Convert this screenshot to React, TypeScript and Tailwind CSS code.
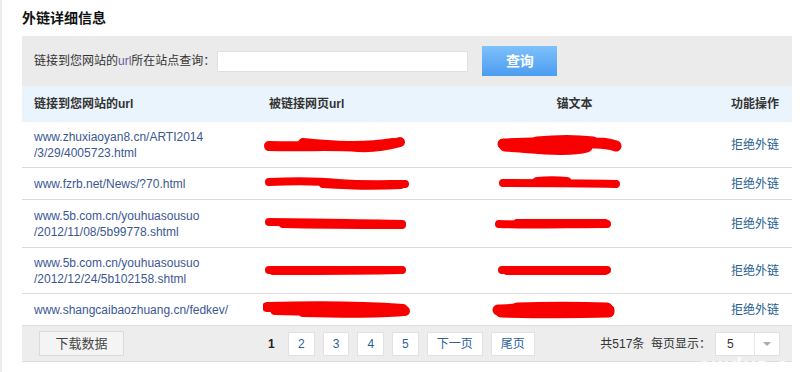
import React from "react";

type Row = {
  url: string[];
  h: string;
  a: string[];
  b: string[];
};

const rows: Row[] = [
  {
    url: ["www.zhuxiaoyan8.cn/ARTI2014", "/3/29/4005723.html"],
    h: "h-[46px]",
    a: ["M6 12 C40 13 70 11 95 13 C115 14 130 10 137 8", "M40 9 C70 12 100 14 130 9"],
    b: ["M26 10 C50 9 90 8 118 9 C126 9 130 9 139 12", "M28 12 C60 14 90 18 110 13", "M60 8 C80 6 100 6 116 8"],
  },
  {
    url: ["www.fzrb.net/News/?70.html"],
    h: "h-[32px]",
    a: ["M6 9 C30 8 55 8 75 10 C100 12 125 11 142 11", "M60 11 C90 13 120 13 138 12"],
    b: ["M26 10 C60 10 100 10 139 11", "M60 8 C70 7 80 7 90 8"],
  },
  {
    url: ["www.5b.com.cn/youhuasousuo", "/2012/11/08/5b99778.shtml"],
    h: "h-[48px]",
    a: ["M6 9 C40 9 90 10 139 11", "M20 11 C60 12 100 12 139 12"],
    b: ["M22 11 C50 12 90 11 130 11", "M40 10 C70 10 100 10 128 10"],
  },
  {
    url: ["www.5b.com.cn/youhuasousuo", "/2012/12/24/5b102158.shtml"],
    h: "h-[46px]",
    a: ["M6 10 C40 10 90 10 139 10", "M10 11 C50 11 100 11 138 10"],
    b: ["M25 10 C55 10 95 10 130 10", "M30 11 C60 11 100 11 128 11"],
  },
  {
    url: ["www.shangcaibaozhuang.cn/fedkev/"],
    h: "h-[32px]",
    a: ["M4 8 C40 7 100 7 140 10", "M12 11 C50 12 100 12 142 12", "M40 13 C80 14 120 14 140 12"],
    b: ["M21 11 C50 10 90 6 132 11", "M24 13 C60 14 100 14 132 13", "M40 9 C70 8 100 8 130 9"],
  },
];

function Scribble({ paths, w, thick }: { paths: string[]; w: number; thick: number }) {
  return (
    <svg width={w} height={22} viewBox={`0 0 ${w} 22`} className="block">
      {paths.map((d, i) => (
        <path
          key={i}
          d={d}
          fill="none"
          stroke="#f80000"
          strokeWidth={thick}
          strokeLinecap="round"
          strokeLinejoin="round"
        />
      ))}
    </svg>
  );
}

function PageBtn({ children }: { children: React.ReactNode }) {
  return (
    <div className="h-[24px] px-[9px] min-w-[26px] flex items-center justify-center bg-white border border-[#e2e2e2] text-[#2b5f99] text-[12px]">
      {children}
    </div>
  );
}

export default function App() {
  const font = { fontFamily: '"Liberation Sans", "Noto Sans CJK SC", sans-serif' };
  return (
    <div
      className="relative w-[808px] h-[372px] overflow-hidden bg-white border-l-[2px] border-[#ececec] pl-[20px] pr-[16px]"
      style={font}
    >
      <div className="h-[36px] pt-[9px] text-[14px] font-bold text-[#111] leading-[18px]">外链详细信息</div>

      {/* search */}
      <div className="h-[50px] bg-[#ebebeb] flex items-center pl-[12px]">
        <span className="text-[12px] text-[#333]">
          链接到您网站的<span className="text-[#6b5a9a]">url</span>所在站点查询：
        </span>
        <input className="ml-[2px] w-[251px] h-[21px] bg-white border border-[#e0e0e0] outline-none" />
        <button className="ml-[14px] w-[75px] h-[30px] bg-gradient-to-b from-[#7ec0fa] to-[#4a9df0] text-white text-[14px] font-bold">
          查询
        </button>
      </div>

      {/* header */}
      <div className="h-[36px] bg-[#eaf4fc] flex items-center text-[12px] font-bold text-[#333]">
        <div className="w-[235px] pl-[12px]">链接到您网站的url</div>
        <div className="w-[220px] pl-[12px]">被链接网页url</div>
        <div className="flex-1 text-center">锚文本</div>
        <div className="w-[120px] text-right pr-[13px]">功能操作</div>
      </div>

      {rows.map((r, i) => (
        <div key={i} className={`${r.h} flex items-center border-b border-[#dcdcdc] text-[12px]`}>
          <div className="w-[235px] pl-[12px] text-[#3b5894] leading-[16px]">
            {r.url.map((u) => (
              <div key={u}>{u}</div>
            ))}
          </div>
          <div className="w-[220px] pl-[6px]">
            <Scribble paths={r.a} w={148} thick={i === 0 || i === 4 ? 10 : 8} />
          </div>
          <div className="flex-1 pl-[0px]">
            <Scribble paths={r.b} w={148} thick={i === 0 || i === 4 ? 11 : 8} />
          </div>
          <div className="w-[120px] text-right pr-[13px] text-[#1d5d8f]">拒绝外链</div>
        </div>
      ))}

      {/* footer */}
      <div className="h-[36px] bg-[#ededed] border-b border-[#dcdcdc] flex items-center pl-[17px] pr-[12px] text-[12px]">
        <div className="w-[85px] h-[25px] flex items-center justify-center bg-[#f4f4f4] border border-[#dadada] text-[#444] text-[13px]">
          下载数据
        </div>
        <div className="ml-[144px] flex items-center gap-[8px]">
          <span className="font-bold text-[#222] w-[12px]">1</span>
          <PageBtn>2</PageBtn>
          <PageBtn>3</PageBtn>
          <PageBtn>4</PageBtn>
          <PageBtn>5</PageBtn>
          <PageBtn>下一页</PageBtn>
          <PageBtn>尾页</PageBtn>
        </div>
        <div className="ml-auto flex items-center text-[#333]">
          <span>共517条&nbsp;&nbsp;每页显示：</span>
          <div className="ml-[4px] w-[65px] h-[24px] bg-white border border-[#e0e0e0] flex items-center">
            <span className="pl-[11px] flex-1 text-[#333]">5</span>
            <div className="w-[25px] h-full border-l border-[#e6e6e6] flex items-center justify-center">
              <div className="w-0 h-0 border-l-[4px] border-r-[4px] border-t-[4px] border-l-transparent border-r-transparent border-t-[#aaa]" />
            </div>
          </div>
        </div>
      </div>

      <div className="absolute right-[4px] bottom-[-4px] text-[20px] leading-[22px] font-bold text-white/80 tracking-[2px]">
        swdyz.co
      </div>
    </div>
  );
}
